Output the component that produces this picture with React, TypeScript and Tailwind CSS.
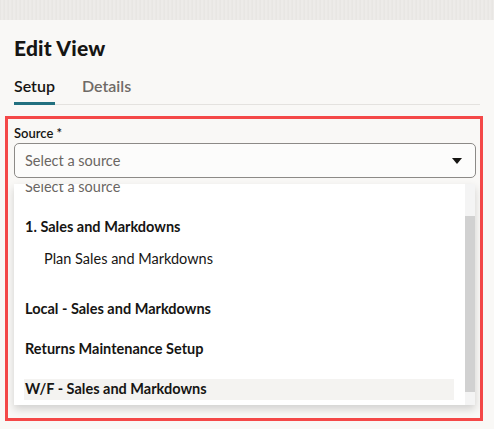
import React from 'react'

const font = { fontFamily: 'Lato, "Noto Sans", sans-serif' }

function Caret() {
  return (
    <svg width="10" height="6" viewBox="0 0 10 6" className="shrink-0">
      <path d="M0 0 L10 0 L5 6 Z" fill="#161513" />
    </svg>
  )
}

export default function App() {
  return (
    <div className="w-[494px] h-[429px] bg-[#f9f8f6] overflow-hidden text-[#161513]" style={font}>
      {/* textured strip at the very top */}
      <div className="h-[20px] bg-[#ebe9e6] bg-[repeating-linear-gradient(90deg,#e6e4e1_0px,#efedeb_2px,#e8e6e3_4px)]" />

      <div className="px-[14px]">
        <h1 className="mt-[16px] text-[21px] leading-[24px] font-black tracking-[0.2px]">Edit View</h1>

        <div className="mt-[16px] flex border-b border-[#e4e2df]">
          <div className="pb-[6px] border-b-[3px] border-[#22707f] text-[16px] leading-[20px] font-semibold -mb-[1px]">
            Setup
          </div>
          <div className="ml-[27px] pb-[6px] text-[16px] leading-[20px] font-semibold text-[#6f6a66]">Details</div>
        </div>
      </div>

      <div className="ml-[5px] mt-[11px] w-[478px] h-[305px] border-[3px] border-[#f44848] pl-[6px] pr-[4px] pt-[6px]">
        <div className="text-[13px] leading-[16px] font-semibold">Source *</div>
        <div className="mt-[2px] h-[35px] rounded-[5px] border border-[#8c8a87] bg-[#fcfcfb] flex items-center pl-[10px] pr-[13px]">
          <span className="flex-1 text-[14.5px] text-[#6a6662]">Select a source</span>
          <Caret />
        </div>

        <div className="mt-[6px] mr-[1px] h-[221px] bg-white shadow-[0_4px_8px_rgba(0,0,0,0.16)] overflow-hidden flex">
          <div className="flex-1 min-w-0 pl-[11px] pr-[10px] text-[14.5px]">
            <div className="-mt-[17px] h-[40px] flex items-center text-[#6a6662]">Select a source</div>
            <div className="h-[40px] flex items-center font-bold">1. Sales and Markdowns</div>
            <div className="h-[24px] flex items-center pl-[19px]">Plan Sales and Markdowns</div>
            <div className="h-[18px]" />
            <div className="h-[40px] flex items-center font-bold">Local - Sales and Markdowns</div>
            <div className="h-[40px] flex items-center font-bold">Returns Maintenance Setup</div>
            <div className="h-[40px] flex items-center">
              <div className="w-full h-[21px] -ml-[1px] pl-[1px] bg-[#f4f3f1] flex items-center font-bold">
                W/F - Sales and Markdowns
              </div>
            </div>
          </div>
          <div className="w-[10px] flex flex-col bg-[#f4f4f4]">
            <div className="h-[32px]" />
            <div className="h-[176px] bg-[#d1d1d1]" />
          </div>
        </div>
      </div>
    </div>
  )
}
